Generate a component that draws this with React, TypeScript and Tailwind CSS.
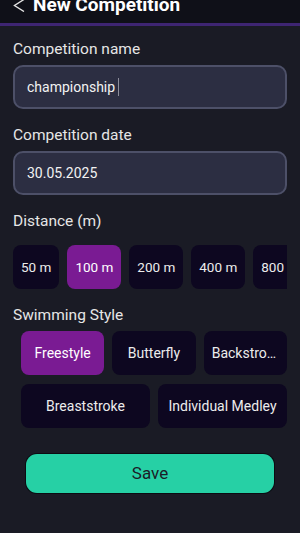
import React, { useState } from 'react';

const DISTANCES = [50, 100, 200, 400, 800, 1500];
const STYLES_TOP = ['Freestyle', 'Butterfly', 'Backstroke'];
const STYLES_BOTTOM = ['Breaststroke', 'Individual Medley'];

const App: React.FC = () => {
  const [name] = useState('championship');
  const [date] = useState('30.05.2025');
  const [distance, setDistance] = useState(100);
  const [style, setStyle] = useState('Freestyle');

  const chip = (active: boolean) =>
    active ? 'bg-[#7a1b93] text-white' : 'bg-[#0d0720] text-[#ececec]';

  return (
    <div
      className="min-h-[533px] w-full bg-[#1a1b25] text-white"
      style={{ fontFamily: 'Roboto, "Noto Sans", sans-serif' }}
    >
      {/* Header */}
      <div className="h-[23px] overflow-hidden bg-[#0f1018]">
        <div className="-mt-[7px] flex h-[24px] items-center px-[13px]">
          <svg width="12" height="13" viewBox="0 0 12 13" className="shrink-0">
            <path d="M11 0.5 L1.5 6.5 L11 12.5" fill="none" stroke="#e5e5e5" strokeWidth="1.4" />
          </svg>
          <h1 className="ml-[8px] text-[19px] leading-[24px] font-bold text-white">New Competition</h1>
        </div>
      </div>
      <div className="h-[3px] bg-[#3e2572]" />

      <div className="px-[13px] pt-[13px]">
        <label className="mb-[6px] block text-[15.5px] leading-5 text-[#e6e6e6]">Competition name</label>
        <div className="flex h-[44px] items-center rounded-[10px] border-2 border-[#4d5068] bg-[#2c2e42] px-3">
          <span className="text-[14px] text-[#f2f2f2]">{name}</span>
          <span className="ml-[3px] h-[18px] w-px bg-[#8d8d9a]" />
        </div>

        <label className="mt-4 mb-[6px] block text-[15.5px] leading-5 text-[#e6e6e6]">Competition date</label>
        <div className="flex h-[44px] items-center rounded-[10px] border-2 border-[#4d5068] bg-[#2c2e42] px-3">
          <span className="text-[14px] text-[#f2f2f2]">{date}</span>
        </div>

        <label className="mt-4 block text-[15.5px] leading-5 text-[#e6e6e6]">Distance (m)</label>
        <div className="mt-[14px] flex gap-2 overflow-hidden">
          {DISTANCES.map((d) => (
            <button
              key={d}
              onClick={() => setDistance(d)}
              className={`flex h-[44px] shrink-0 items-center rounded-[8px] px-2 text-[13.5px] whitespace-nowrap ${chip(distance === d)}`}
            >
              {d} m
            </button>
          ))}
        </div>

        <label className="mt-4 mb-[6px] block text-[15.5px] leading-5 text-[#e6e6e6]">Swimming Style</label>
        <div className="flex flex-col gap-[9px] pl-2">
          <div className="grid grid-cols-3 gap-2">
            {STYLES_TOP.map((s) => (
              <button
                key={s}
                onClick={() => setStyle(s)}
                className={`h-[44px] truncate rounded-[8px] px-2 text-[14px] ${chip(style === s)}`}
              >
                {s}
              </button>
            ))}
          </div>
          <div className="grid grid-cols-2 gap-2">
            {STYLES_BOTTOM.map((s) => (
              <button
                key={s}
                onClick={() => setStyle(s)}
                className={`h-[44px] truncate rounded-[8px] px-2 text-[14px] ${chip(style === s)}`}
              >
                {s}
              </button>
            ))}
          </div>
        </div>

        <div className="mt-[26px] px-[13px]">
          <button className="h-[39px] w-full rounded-[11px] bg-[#26d0a5] text-[17px] text-[#1b1c28] shadow-[0_0_0_1px_#0b0c12]">
            Save
          </button>
        </div>
      </div>
    </div>
  );
};

export default App;
